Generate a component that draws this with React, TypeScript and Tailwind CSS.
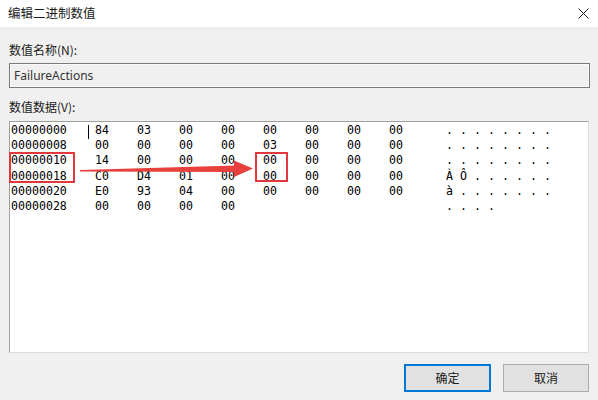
const rows: { addr: string; bytes: string[]; ascii: string[] }[] = [
  { addr: "00000000", bytes: ["84", "03", "00", "00", "00", "00", "00", "00"], ascii: [".", ".", ".", ".", ".", ".", ".", "."] },
  { addr: "00000008", bytes: ["00", "00", "00", "00", "03", "00", "00", "00"], ascii: [".", ".", ".", ".", ".", ".", ".", "."] },
  { addr: "00000010", bytes: ["14", "00", "00", "00", "00", "00", "00", "00"], ascii: [".", ".", ".", ".", ".", ".", ".", "."] },
  { addr: "00000018", bytes: ["C0", "D4", "01", "00", "00", "00", "00", "00"], ascii: ["À", "Ô", ".", ".", ".", ".", ".", "."] },
  { addr: "00000020", bytes: ["E0", "93", "04", "00", "00", "00", "00", "00"], ascii: ["à", ".", ".", ".", ".", ".", ".", "."] },
  { addr: "00000028", bytes: ["00", "00", "00", "00"], ascii: [".", ".", ".", "."] },
];

const ui = "font-['Microsoft_YaHei','Noto_Sans_CJK_SC',sans-serif]";

export default function App() {
  return (
    <div className={`relative w-[598px] h-[400px] flex flex-col bg-[#f0f0f0] text-[#1a1a1a] ${ui}`}>
      {/* title bar */}
      <div className="h-[27px] bg-white flex items-center justify-between pl-[8px] pr-[8px]">
        <span className="text-[12.5px] leading-none">编辑二进制数值</span>
        <svg width="11" height="11" viewBox="0 0 11 11" className="mr-[1px]">
          <path d="M0.5 0.5 L10.5 10.5 M10.5 0.5 L0.5 10.5" stroke="#222" strokeWidth="1" />
        </svg>
      </div>

      <div className="flex flex-col px-[9px]">
        <div className="mt-[15px] h-[16px] leading-[16px] text-[12px]">数值名称(N):</div>
        <div className="mt-[5px] h-[25px] w-[581px] border border-[#7a7a7a] shadow-[inset_0_0_0_1px_#fafafa] flex items-center pl-[4px] text-[12px] font-['Segoe_UI','Noto_Sans',sans-serif] text-[#333]">
          FailureActions
        </div>
        <div className="mt-[11px] h-[16px] leading-[16px] text-[12px]">数值数据(V):</div>

        <div className="relative mt-[6px] h-[232px] w-[580px] bg-white border border-t-[#a0a0a0] border-l-[#a0a0a0] border-r-[#dcdcdc] border-b-[#dcdcdc] pt-[1px] pl-[1px] font-['DejaVu_Sans_Mono',monospace] text-[11.6px] text-black">
          {rows.map((r) => (
            <div key={r.addr} className="flex h-[15.2px] leading-[15.2px]">
              <span className="w-[84px]">{r.addr}</span>
              {Array.from({ length: 8 }).map((_, i) => (
                <span key={i} className="w-[42px]">{r.bytes[i] ?? ""}</span>
              ))}
              <span className="ml-[15px] flex">
                {r.ascii.map((c, i) => (
                  <span key={i} className="w-[14px]">{c}</span>
                ))}
              </span>
            </div>
          ))}
          <div className="absolute left-[78px] top-[3px] w-px h-[14px] bg-black" />
        </div>

        <div className="mt-[11px] flex justify-end gap-[12px] pr-0">
          <button className="w-[87px] h-[28px] bg-[#e1e1e1] border-2 border-[#0078d7] text-[12px]">确定</button>
          <button className="w-[86px] h-[28px] bg-[#e1e1e1] border border-[#adadad] text-[12px]">取消</button>
        </div>
      </div>

      {/* annotation overlay */}
      <svg className="absolute inset-0 pointer-events-none" width="598" height="400">
        <rect x="10" y="153" width="64" height="29" fill="none" stroke="#e2383d" strokeWidth="2" />
        <rect x="256" y="153" width="31" height="28" fill="none" stroke="#e2383d" strokeWidth="2" />
        <polygon points="80,170 80,171.5 236,172 236,165.5" fill="#e8403c" />
        <polygon points="234,160.5 253,168.5 234,177" fill="#e8403c" />
      </svg>
    </div>
  );
}
